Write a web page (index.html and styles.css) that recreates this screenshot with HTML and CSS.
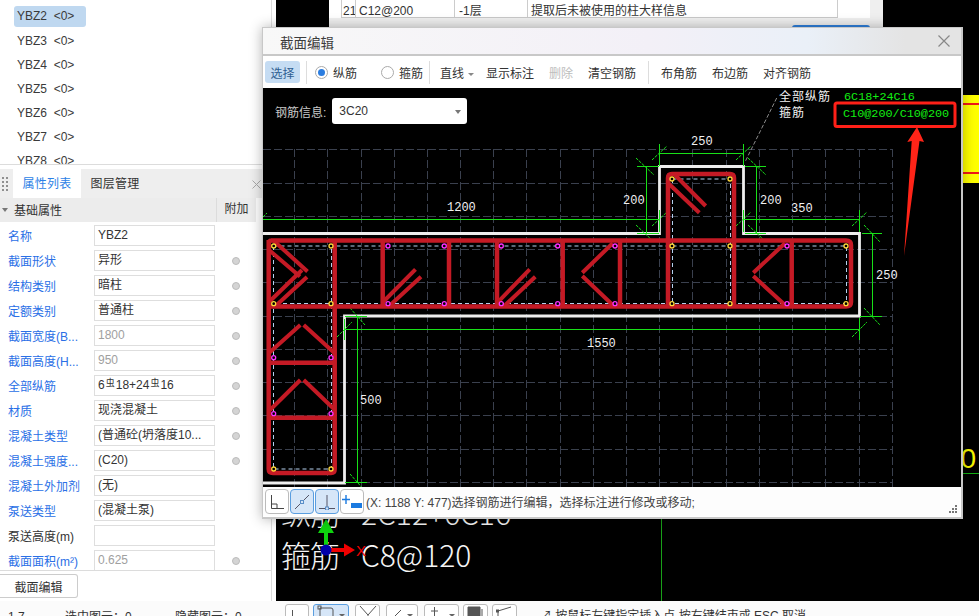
FILE: index.html
```html
<!DOCTYPE html>
<html lang="zh">
<head>
<meta charset="utf-8">
<title>截面编辑</title>
<link rel="stylesheet" href="styles.css">
</head>
<body>
<div class="app">
  <div class="top">
    <aside class="side">
      <ul class="list">
        <li class="item sel">YBZ2 &nbsp;&lt;0&gt;</li>
        <li class="item">YBZ3 &nbsp;&lt;0&gt;</li>
        <li class="item">YBZ4 &nbsp;&lt;0&gt;</li>
        <li class="item">YBZ5 &nbsp;&lt;0&gt;</li>
        <li class="item">YBZ6 &nbsp;&lt;0&gt;</li>
        <li class="item">YBZ7 &nbsp;&lt;0&gt;</li>
        <li class="item">YBZ8 &nbsp;&lt;0&gt;</li>
      </ul>
      <div class="tabs">
        <svg class="grip" width="7" height="15" viewBox="0 0 7 15"><path d="M0 0h2v2H0zM4 0h2v2H4zM0 4h2v2H0zM4 4h2v2H4zM0 8h2v2H0zM4 8h2v2H4zM0 12h2v2H0zM4 12h2v2H4z"/></svg>
        <div class="tab on">属性列表</div>
        <div class="tab">图层管理</div>
        <svg class="tabx" width="9" height="9" viewBox="0 0 9 9"><path d="M.5.5l8 8M8.5.5l-8 8"/></svg>
      </div>
      <div class="sec"><span class="caret"></span><span class="sec-name">基础属性</span><span class="sec-add">附加</span></div>
      <div class="rows">
        <div class="row"><span class="lab">名称</span><span class="val">YBZ2</span></div>
        <div class="row"><span class="lab">截面形状</span><span class="val">异形</span><i class="dot"></i></div>
        <div class="row"><span class="lab">结构类别</span><span class="val">暗柱</span><i class="dot"></i></div>
        <div class="row"><span class="lab">定额类别</span><span class="val">普通柱</span><i class="dot"></i></div>
        <div class="row"><span class="lab">截面宽度(B...</span><span class="val mute">1800</span><i class="dot"></i></div>
        <div class="row"><span class="lab">截面高度(H...</span><span class="val mute">950</span><i class="dot"></i></div>
        <div class="row"><span class="lab">全部纵筋</span><span class="val">6<small class="bar">虫</small>18+24<small class="bar">虫</small>16</span><i class="dot"></i></div>
        <div class="row"><span class="lab">材质</span><span class="val">现浇混凝土</span><i class="dot"></i></div>
        <div class="row"><span class="lab">混凝土类型</span><span class="val">(普通砼(坍落度10...</span><i class="dot"></i></div>
        <div class="row"><span class="lab">混凝土强度...</span><span class="val">(C20)</span><i class="dot"></i></div>
        <div class="row"><span class="lab">混凝土外加剂</span><span class="val">(无)</span></div>
        <div class="row"><span class="lab">泵送类型</span><span class="val">(混凝土泵)</span></div>
        <div class="row"><span class="lab dark">泵送高度(m)</span><span class="val"></span></div>
        <div class="row"><span class="lab">截面面积(m²)</span><span class="val mute">0.625</span><i class="dot"></i></div>
      </div>
      <div class="act"><button class="btn">截面编辑</button></div>
    </aside>
    <main class="cad">
      <div class="bigtxt"><div class="big-l1"><span>纵筋</span><span>2C12+6C16</span></div><div class="big-l2"><span>箍筋</span><span>C8@120</span></div></div>
      <svg class="gizmo" width="92" height="45" viewBox="0 0 92 45">
        <path class="gz-g" d="M48 34V17h-6L50 3l8 14h-6v17z"/>
        <path class="gz-r" d="M50 32h18v-4.500l11 6.500-11 6.500V36H50z"/>
        <circle class="gz-b" cx="50" cy="34" r="5.500"/>
        <text class="gz-x" x="80" y="40">X</text>
      </svg>
    </main>
  </div>
  <footer class="foot">
    <div class="foot-l"><span class="f1">1.7</span><span class="f2">选中图元：0</span><span class="f3">隐藏图元：0</span></div>
    <div class="foot-r">
      <span class="tb w1"><svg width="24" height="12" viewBox="0 0 24 12"><path d="M6.500 5V12"/></svg></span>
      <span class="tb w2 act-b"><svg width="34" height="12" viewBox="0 0 34 12"><path d="M6 3H17Q19 3 19 5V12M6 3V12"/><rect x="4" y="1" width="3" height="3"/><path class="fc" d="M25 9h6l-3 3z"/></svg></span>
      <span class="tb w3"><svg width="23" height="12" viewBox="0 0 23 12"><path d="M4 1L12 10L20 1M12 10V12"/></svg></span>
      <span class="tb w4"><svg width="30" height="12" viewBox="0 0 30 12"><path d="M7 12L14 5"/><path class="fc" d="M20 9h6l-3 3z"/></svg></span>
      <span class="tb w5"><svg width="33" height="12" viewBox="0 0 33 12"><path d="M6 6H13M9.500 2V11"/><path class="fc" d="M24 9h6l-3 3z"/></svg></span>
      <span class="tb w3b"><svg width="23" height="12" viewBox="0 0 23 12"><path class="fd" d="M4 2H16V12H4z"/><path d="M18 4V12"/></svg></span>
      <span class="tb w3b"><svg width="23" height="12" viewBox="0 0 23 12"><path d="M5 12V6L18 2"/><rect x="3.500" y="5" width="2" height="2"/></svg></span>
      <span class="hint">↗ 按鼠标左键指定插入点,按右键结束或 ESC 取消</span>
    </div>
  </footer>

  <div class="back">
    <div class="back-white">
      <div class="tr"><span class="c1">21</span><span class="c2">C12@200</span><span class="c3">-1层</span><span class="c4">提取后未被使用的柱大样信息</span></div>
    </div>
    <div class="back-btn"></div>
  </div>

  <div class="yel"><i></i><i></i></div>
  <div class="yzero">0</div>
  <div class="gline"></div>

  <section class="dlg">
    <header class="dlg-t"><span>截面编辑</span>
      <svg class="dlg-x" width="12" height="12" viewBox="0 0 12 12"><path d="M.5.500l11 11M11.500.500l-11 11"/></svg>
    </header>
    <nav class="bar-t">
      <button class="t-sel">选择</button><span class="sp s1"></span>
      <label class="rd"><i class="ro on"></i>纵筋</label>
      <label class="rd r2"><i class="ro"></i>箍筋</label><span class="sp s2"></span>
      <span class="t-line">直线<i class="car"></i></span>
      <span class="t t-a">显示标注</span><span class="t t-b mute2">删除</span><span class="t t-b">清空钢筋</span><span class="sp s3"></span>
      <span class="t t-c">布角筋</span><span class="t t-b">布边筋</span><span class="t t-b">对齐钢筋</span>
    </nav>
    <div class="cv">
      <svg class="draw" width="698" height="399" viewBox="263 88 698 399">
        <path class="grid" d="M263 149.500H892M263 183.500H892M263 216.500H892M263 249.500H892M263 282.500H892M263 316.500H892M263 349.500H892M263 382.500H892M263 415.500H892M263 449.500H892M263 482.500H892"/>
        <path class="grid" d="M294.500 149V487M327.500 149V487M361.500 149V487M394.500 149V487M427.500 149V487M460.500 149V487M493.500 149V487M526.500 149V487M560.500 149V487M593.500 149V487M626.500 149V487M659.500 149V487M692.500 149V487M726.500 149V487M759.500 149V487M792.500 149V487M825.500 149V487M859.500 149V487M892.500 149V487"/>

        <path class="wall" d="M263 233.500H659.500V166.500H743.500V233.500H859.500V316H344.500V483H263"/>

        <path class="gl" d="M263 219.500H659M743 219.500H860M659.500 144V166M743.500 144V166M659 153.500H744M637 166.500H659M637 233H659M646.500 167V233M745 166.500H766M745 233H766M756.500 167V233M659.500 210V232M743.500 210V232M859.500 210V232M862 233.500H882M860 316H882M872.500 233V316M859.500 318V340M344 329.500H859M344.500 319V340M345 316.500H367M357.500 316V482M345 482.500H367"/>
        <path class="gt" d="M652 160L667 146M736 160L751 146M636 158L654 175M636 225L654 242M748 158L766 175M748 225L766 242M652 226L667 212M736 226L751 212M852 226L867 212M864 225L880 242M864 308L880 325M852 337L867 322M337 337L352 322M350 308L365 325M350 474L365 491M263 217L267 213"/>

        <path class="dash" d="M273.500 246H846.500V303.500H273.500M273.500 246V469H331.500V246M672.500 179H730.500V303.500M672.500 179V303.500"/>

        <path class="reb" d="M271 240.500H846Q851 240.500 851 245V302Q851 306.500 846 306.500H269M268.700 244Q268.700 240.500 272 240.500M268.700 240V469Q268.700 473 273 473H331Q334.700 473 334.700 469V240M668 306V178Q668 174 672 174H730Q734 174 734 178V306M382.700 240V306M449 240V306M497 240V306M562.700 240V306M620 240V306M791.700 240V306M269 362.700H335M269 417.700H335"/>
        <path class="reb2" d="M274 241L307.500 271.500M269 250L300 276.500M269 302L302 270M275 306.500L307 277M383 302L415.500 269.300M388.700 306.500L421 276.700M497.700 302.300L529.700 269.300M503.700 306.500L535.300 276.700M612.700 243.300L582.300 272.700M582.300 276L612.700 305M785 243.300L753.300 272.700M753.300 276L785 305M675 175L705.700 206M668.300 183.300L699.300 212.700M268.700 353.300L300.300 325M303.700 325L334.700 353.300M270 410L300.300 380M303.700 380L335 410"/>

        <g class="yd">
          <circle cx="273.700" cy="246" r="2"/><circle cx="331" cy="246" r="2"/><circle cx="273.700" cy="303.700" r="2"/><circle cx="331" cy="303.700" r="2"/><circle cx="273.700" cy="469" r="2"/><circle cx="331" cy="469" r="2"/><circle cx="672" cy="179" r="2"/><circle cx="730" cy="179" r="2"/><circle cx="672" cy="246" r="2"/><circle cx="730" cy="246" r="2"/><circle cx="672" cy="303.700" r="2"/><circle cx="730" cy="303.700" r="2"/><circle cx="846" cy="246" r="2"/><circle cx="846" cy="303.700" r="2"/>
        </g>
        <g class="md">
          <circle cx="388" cy="246" r="2"/><circle cx="444.300" cy="246" r="2"/><circle cx="388" cy="303.700" r="2"/><circle cx="444.300" cy="303.700" r="2"/><circle cx="501.300" cy="246" r="2"/><circle cx="557.700" cy="246" r="2"/><circle cx="501.300" cy="303.700" r="2"/><circle cx="557.700" cy="303.700" r="2"/><circle cx="615" cy="246" r="2"/><circle cx="615" cy="303.700" r="2"/><circle cx="787" cy="246" r="2"/><circle cx="787" cy="303.700" r="2"/><circle cx="273.700" cy="357.700" r="2"/><circle cx="331" cy="357.700" r="2"/><circle cx="273.700" cy="413.700" r="2"/><circle cx="331" cy="413.700" r="2"/>
        </g>

        <g class="dim">
          <text x="691" y="145">250</text><text x="623" y="204">200</text><text x="760" y="204">200</text><text x="791" y="212">350</text><text x="447" y="211">1200</text><text x="876" y="279">250</text><text x="587" y="347">1550</text><text x="360" y="404">500</text>
        </g>
        <path class="lead" d="M776.700 98L745 162"/>
        <text class="note" x="779" y="101">全部纵筋</text>
        <text class="note" x="779" y="117">箍筋</text>
        <text class="gtxt" x="844" y="100">6C18+24C16</text>
        <text class="gtxt" x="843" y="117">C10@200/C10@200</text>
        <rect class="rbox" x="835" y="103" width="120" height="23.500" rx="2"/>
        <path class="rarrow" d="M904 256L911.700 141L907.300 142L917 127L924 142L919.500 141Z"/>
      </svg>
      <div class="info"><span class="info-l">钢筋信息:</span><div class="info-s">3C20<i class="car"></i></div></div>
    </div>
    <div class="st">
      <span class="ib"><svg width="16" height="16" viewBox="0 0 16 16"><path d="M2.500 1V14.500H15M2.500 10H8V14.500"/></svg></span>
      <span class="ib on"><svg width="16" height="16" viewBox="0 0 16 16"><path d="M1 15L15 1"/><rect x="6.500" y="6.500" width="3" height="3"/></svg></span>
      <span class="ib on"><svg width="16" height="16" viewBox="0 0 16 16"><path d="M8 1V14M0 14.500H16"/><rect x="6.500" y="13" width="3" height="3"/></svg></span>
      <span class="ib"><svg class="plus" width="20" height="16" viewBox="0 0 20 16"><path class="pl" d="M4 1V10M0 5.500H8"/><rect x="9" y="9" width="11" height="5"/></svg></span>
      <span class="st-t">(X: 1188 Y: 477)选择钢筋进行编辑，选择标注进行修改或移动;</span>
      <svg class="rz" width="8" height="8" viewBox="0 0 8 8"><path d="M6 0h2v2H6zM3 3h2v2H3zM6 3h2v2H6zM0 6h2v2H0zM3 6h2v2H3zM6 6h2v2H6z"/></svg>
    </div>
  </section>
</div>
</body>
</html>
```
FILE: styles.css
```css
* { box-sizing: border-box; }
html, body { margin: 0; padding: 0; }
body { font-family: "Liberation Sans", "Noto Sans CJK SC", sans-serif; font-size: 12px; color: #333; background: #fff; }
.app { position: relative; width: 979px; height: 616px; overflow: hidden; display: flex; flex-direction: column; }
.top { display: flex; height: 601px; flex: none; }

.side { width: 272px; flex: none; border-right: 1px solid #dcdcdc; display: flex; flex-direction: column; background: #fff; }
.list { list-style: none; margin: 0; padding: 6px 0 0 14px; height: 165px; overflow: hidden; border-bottom: 1px solid #dcdcdc; flex: none; }
.item { width: 72px; height: 21px; line-height: 23px; margin-bottom: 3px; padding-left: 3px; border-radius: 3px; white-space: nowrap; color: #3a3a3a; }
.item.sel { background: #bfd8f0; line-height: 21px; }

.tabs { height: 29px; margin-top: 4px; background: #eee; display: flex; align-items: stretch; position: relative; flex: none; }
.grip { margin: 8px 0 0 2px; fill: #8f8f8f; width: 7px; flex: none; }
.tab { height: 29px; line-height: 30px; padding: 0; width: 68px; text-align: center; font-size: 12px; letter-spacing: .25px; white-space: nowrap; flex: none; }
.tab.on { background: #fff; color: #2c7fe6; margin-left: 4px; }
.tabx { position: absolute; left: 252px; top: 11px; stroke: #a8a8a8; fill: none; }

.sec { height: 24px; width: 256px; background: #ececec; display: flex; align-items: center; flex: none; position: relative; padding-bottom: 1px; }
.caret { width: 0; height: 0; margin-left: 2px; border: 3px solid transparent; border-top: 4px solid #777; border-bottom: 0; }
.sec-name { margin-left: 6px; letter-spacing: 0; color: #333; }
.sec-add { position: absolute; left: 216px; top: 0; width: 40px; height: 24px; line-height: 23px; text-align: center; border-left: 1px solid #dcdcdc; }

.rows { flex: 1; min-height: 0; overflow: hidden; padding-top: 3px; display: flex; flex-direction: column; gap: 4px; }
.row { display: grid; grid-template-columns: 94px 121px 42px; height: 21px; flex: none; align-items: center; }
.lab { padding: 0 0 1px 8px; color: #2a6fe6; white-space: nowrap; overflow: hidden; }
.lab.dark { color: #333; }
.val { height: 21px; line-height: 18px; border: 1px solid #dedede; padding-left: 3px; white-space: nowrap; overflow: hidden; color: #333; }
.val.mute { color: #a0a0a0; }
.bar { font-size: 9px; position: relative; top: -3px; margin: 0 1px; }
.dot { width: 8px; height: 8px; justify-self: center; border-radius: 50%; background: #d4d4d4; border: 1px solid #bcbcbc; }

.act { height: 31px; border-top: 1px solid #dcdcdc; padding-top: 3px; flex: none; }
.btn { display: block; width: 78px; height: 24px; padding: 0; background: #fff; border: 1px solid #ccc; border-left: 0; border-radius: 0 3px 3px 0; font: inherit; color: #333; }

.cad { flex: 1; background: #000; margin-left: 4px; position: relative; overflow: hidden; }
.bigtxt { position: absolute; left: 5px; top: 491px; color: #f5f5f5; font-size: 30px; line-height: 42px; white-space: nowrap; font-family: "Noto Sans CJK SC", sans-serif; font-weight: 300; }
.big-l1, .big-l2 { display: flex; gap: 20px; }
.big-l1 { height: 42px; }
.big-l2 { height: 42px; }
.big-l1 span:first-child, .big-l2 span:first-child { width: 60px; letter-spacing: -1px; }
.gizmo { position: absolute; left: 0; top: 516px; }
.gz-g { fill: #0fd40f; }
.gz-r { fill: #f00000; }
.gz-b { fill: #0000a8; }
.gz-x { fill: #f00000; font-size: 15px; font-family: "Liberation Sans", sans-serif; }

.foot { height: 15px; flex: none; display: flex; background: #fbfbfb; overflow: hidden; position: relative; }
.foot-l { width: 276px; flex: none; display: flex; padding-top: 8px; line-height: 16px; }
.f1 { margin-left: 8px; width: 57px; }
.f2 { width: 110px; }
.foot-r { display: flex; gap: 6px; padding: 3px 0 0 9px; }
.tb { height: 20px; border: 1px solid #bbb; border-radius: 3px; background: #fff; flex: none; }
.tb svg { display: block; fill: none; stroke: #555; stroke-width: 1; }
.tb .fc { fill: #666; stroke: none; }
.tb .fd { fill: #555; }
.w1 { width: 24px; }
.w2 { width: 36px; margin-left: -2px; }
.act-b { background: #d6e6f8; border-color: #5a9ee0; }
.w3 { width: 25px; }
.w4 { width: 32px; }
.w5 { width: 35px; }
.w3b { width: 25px; margin-left: -2px; }
.hint { margin-left: 17px; line-height: 20px; padding-top: 2px; white-space: nowrap; }

.back { position: absolute; left: 329px; top: 0; width: 554px; height: 60px; background: #efefef; }
.back-white { width: 541px; height: 18px; background: #fff; padding-left: 12px; }
.tr { display: flex; width: 497px; height: 18px; line-height: 22px; border-right: 1px solid #ccc; border-bottom: 1px solid #c8c8c8; }
.tr span { border-left: 1px solid #ccc; padding-left: 3px; height: 17px; white-space: nowrap; overflow: hidden; background: #fff; }
.c1 { width: 14px; padding-left: 1px !important; }
.c2 { width: 99px; }
.c3 { width: 73px; padding-left: 4px !important; }
.c4 { flex: 1; }
.back-btn { position: absolute; left: 463px; top: 25px; width: 78px; height: 24px; background: #2f80dc; border-radius: 3px 3px 0 0; }

.yel { position: absolute; left: 950px; top: 95px; width: 29px; height: 88px; background: linear-gradient(90deg, #d0d000, #ffff00 30%); display: flex; flex-direction: column; justify-content: space-between; padding: 8px 0 9px; }
.yel i { display: block; height: 2px; background: #f01818; }
.yzero { position: absolute; left: 955px; top: 441px; width: 24px; height: 33px; line-height: 36px; text-align: right; padding-right: 3px; color: #f5f500; font-size: 28px; border-bottom: 1px solid #15b015; }
.gline { position: absolute; left: 661px; top: 510px; width: 1px; height: 91px; background: #18a018; }

.dlg { position: absolute; left: 262px; top: 27px; width: 701px; height: 492px; background: #fff; border: solid #c8c8c8; border-width: 1px 2px 2px 1px; display: flex; flex-direction: column; box-shadow: 0 0 12px rgba(0,0,0,.3); }
.dlg-t { height: 26px; flex: none; background: linear-gradient(90deg, #f8f8f8, #f3f0f7 55%, #eaf0f8 78%, #e4e4e4 92%); border-bottom: 0; display: flex; align-items: center; padding: 1px 0 0 17px; font-size: 13.500px; color: #3c3c3c; position: relative; font-family: "Noto Sans CJK SC", sans-serif; }
.dlg-x { position: absolute; left: 675px; top: 7px; stroke: #888; fill: none; stroke-width: 1.200; }
.bar-t { height: 34px; flex: none; background: #fff; border-top: 2px solid #c8c8c8; display: flex; align-items: center; position: relative; color: #333; }
.t-sel { width: 35px; height: 22px; margin-left: 2px; border: 0; border-radius: 3px; background: #c5dcf3; color: #2f5f92; font: inherit; padding: 0; }
.sp { width: 1px; height: 23px; background: #ddd; flex: none; }
.s1 { margin-left: 6px; }
.rd { display: flex; align-items: center; gap: 5px; white-space: nowrap; }
.rd { margin-left: 8px; }
.rd.r2 { margin-left: 24px; }
.ro { display: block; width: 13px; height: 13px; border-radius: 50%; border: 1px solid #aaa; background: #fff; position: relative; }
.ro.on::after { content: ""; position: absolute; left: 2px; top: 2px; width: 7px; height: 7px; border-radius: 50%; background: #2b7de0; }
.s2 { margin-left: 6px; }
.t-line { margin-left: 10px; width: 37px; white-space: nowrap; position: relative; }
.car { display: inline-block; width: 0; height: 0; border: 3px solid transparent; border-top: 3px solid #888; border-bottom: 0; }
.t-line .car { margin-left: 4px; vertical-align: 2px; }
.t { white-space: nowrap; }
.t-a { margin-left: 9px; }
.t-b { margin-left: 15px; }
.mute2 { color: #bdbdbd; }
.s3 { margin-left: 12px; }
.t-c { margin-left: 12px; }

.cv { height: 399px; flex: none; background: #000; position: relative; overflow: hidden; }
.draw { display: block; }
.grid { fill: none; stroke: #3a404e; stroke-width: 1; stroke-dasharray: 8 3; }
.wall { fill: none; stroke: #eeeeee; stroke-width: 2.800; }
.gl { fill: none; stroke: #18e018; stroke-width: 1; shape-rendering: crispEdges; }
.gt { fill: none; stroke: #18e018; stroke-width: 1; stroke-dasharray: 3 1; }
.dash { fill: none; stroke: #b4d0ee; stroke-width: 1; stroke-dasharray: 4 3; }
.reb { fill: none; stroke: #c41a25; stroke-width: 4.500; }
.reb2 { fill: none; stroke: #c41a25; stroke-width: 4; }
.yd circle { fill: #000; stroke: #ffd83a; stroke-width: 1.300; }
.md circle { fill: #000; stroke: #ff30ff; stroke-width: 1.300; }
.dim text { fill: #f0f0f0; font-family: "Liberation Mono", monospace; font-size: 12px; }
.lead { fill: none; stroke: #8a8a8a; stroke-width: 1; stroke-dasharray: 4 2; }
.note { fill: #f2f2f2; font-family: "Noto Sans CJK SC", sans-serif; font-size: 12px; letter-spacing: 1px; }
.gtxt { fill: #12ee12; font-family: "Liberation Mono", monospace; font-size: 11.800px; }
.rbox { fill: none; stroke: #ff2018; stroke-width: 3; }
.rarrow { fill: #ff2418; }

.info { position: absolute; left: 12px; top: 10px; display: flex; align-items: center; gap: 6px; }
.info-l { color: #c9c9c9; white-space: nowrap; }
.info-s { width: 135px; height: 26px; line-height: 26px; background: #fff; border-radius: 3px; padding-left: 7px; color: #333; position: relative; }
.info-s .car { position: absolute; right: 6px; top: 12px; border-top: 4px solid #777; }

.st { height: 29px; flex: none; background: #fdfdfd; display: flex; align-items: center; padding-left: 2px; gap: 1px; position: relative; }
.ib { width: 24px; height: 25px; border: 1px solid #bbb; border-radius: 4px; background: #fff; display: flex; align-items: center; justify-content: center; flex: none; }
.ib svg { fill: none; stroke: #444; stroke-width: 1; }
.ib.on { background: #d6e6f8; border-color: #5a9ee0; }
.ib.on svg { stroke: #556; }
.ib.on rect { fill: #d6e6f8; stroke: #5a8ec8; }
.plus .pl { stroke: #1a7ae0; stroke-width: 1.400; }
.plus rect { fill: #1a7ae0; stroke: none; }
.st-t { margin-left: 1px; white-space: nowrap; color: #444; }
.rz { position: absolute; right: 4px; bottom: 3px; fill: #777; }
```
